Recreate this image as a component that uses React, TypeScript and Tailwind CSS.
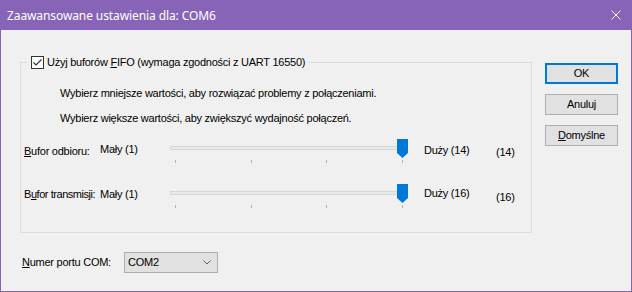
import { type ReactNode } from 'react';

const ui = "font-['Liberation_Sans',Arial,sans-serif] text-[11px] leading-[15px] tracking-[-0.25px] text-black";

function CheckBox() {
    return (
        <svg width="13" height="13" viewBox="0 0 13 13" className="block shrink-0">
            <rect x="0.5" y="0.5" width="12" height="12" fill="#fff" stroke="#333" />
            <path d="M2.5 6.5 L5 9 L10.5 3.5" fill="none" stroke="#333" strokeWidth="1.2" />
        </svg>
    );
}

function Slider() {
    return (
        <div className="relative h-[25px] w-[238px] shrink-0">
            <div className="mt-[7px] h-[4px] border border-[#d6d6d6] bg-[#e7eaea]" />
            <div className="mt-[10px] flex justify-between px-[5px]">
                <div className="h-[3px] w-px bg-[#b4b4b4]" />
                <div className="h-[3px] w-px bg-[#b4b4b4]" />
                <div className="h-[3px] w-px bg-[#b4b4b4]" />
                <div className="h-[3px] w-px bg-[#b4b4b4]" />
            </div>
            {/* suwak */}
            <svg width="11" height="19" viewBox="0 0 11 19" className="absolute top-0 left-[227px]">
                <path d="M0 0H11V14L5.5 19L0 14Z" fill="#0078d7" />
            </svg>
        </div>
    );
}

function Button({ children, primary }: { children: ReactNode; primary?: boolean }) {
    return (
        <div
            className={
                primary
                    ? 'flex h-[21px] w-[73px] items-center justify-center border-2 border-[#0078d7] bg-[#e1e1e1]'
                    : 'flex h-[21px] w-[73px] items-center justify-center border border-[#adadad] bg-[#e1e1e1]'
            }
        >
            {children}
        </div>
    );
}

export default function App() {
    return (
        <div className={`flex h-[292px] w-[632px] flex-col bg-[#8764b8] ${ui}`}>
            {/* pasek tytułu */}
            <div className="flex h-[30px] shrink-0 items-center justify-between pr-[11px] pl-[7px]">
                <span className="font-['Noto_Sans',sans-serif] text-[12px] tracking-[-0.1px] text-white">Zaawansowane ustawienia dla: COM6</span>
                <svg width="10" height="10" viewBox="0 0 10 10" className="block">
                    <path d="M0.5 0.5 L9.5 9.5 M9.5 0.5 L0.5 9.5" stroke="#fff" strokeWidth="1" />
                </svg>
            </div>

            <div className="mx-[1px] mb-[1px] flex flex-1 bg-[#f0f0f0]">
                <div className="pt-[25px] pl-[19px]">
                    <fieldset className="h-[178px] w-[512px] border border-[#dcdcdc]">
                        <legend className="ml-[6px] px-[4px]">
                            <span className="flex h-[15px] items-center gap-[3px]">
                                <CheckBox />
                                <span>
                                    Użyj buforów <u>F</u>IFO (wymaga zgodności z UART 16550)
                                </span>
                            </span>
                        </legend>
                        <div className="flex flex-col">
                            <div className="mt-[16px] pl-[39px]">Wybierz mniejsze wartości, aby rozwiązać problemy z połączeniami.</div>
                            <div className="mt-[10px] pl-[39px]">Wybierz większe wartości, aby zwiększyć wydajność połączeń.</div>

                            <div className="mt-[13px] flex items-start pl-[3px] whitespace-nowrap">
                                <div className="mt-[5px] w-[76px] shrink-0">
                                    <u>B</u>ufor odbioru:
                                </div>
                                <div className="mt-[3px] w-[70px] shrink-0">Mały (1)</div>
                                <Slider />
                                <div className="mt-[4px] ml-[16px] w-[72px]">Duży (14)</div>
                                <div className="mt-[6px]">(14)</div>
                            </div>

                            <div className="mt-[20px] flex items-start pl-[3px] whitespace-nowrap">
                                <div className="mt-[3px] w-[76px] shrink-0 tracking-[-0.45px]">
                                    B<u>u</u>for transmisji:
                                </div>
                                <div className="mt-[3px] w-[70px] shrink-0">Mały (1)</div>
                                <Slider />
                                <div className="mt-[2px] ml-[16px] w-[72px]">Duży (16)</div>
                                <div className="mt-[6px]">(16)</div>
                            </div>
                        </div>
                    </fieldset>

                    <div className="mt-[19px] flex h-[21px] items-center">
                        <div className="w-[104px] pl-[2px]">
                            <u>N</u>umer portu COM:
                        </div>
                        <div className="flex h-[21px] w-[94px] items-center justify-between border border-[#adadad] bg-[#e1e1e1] pr-[6px] pl-[3px]">
                            <span>COM2</span>
                            <svg width="8" height="5" viewBox="0 0 8 5" className="block">
                                <path d="M0.5 0.5 L4 4 L7.5 0.5" fill="none" stroke="#606060" strokeWidth="1" />
                            </svg>
                        </div>
                    </div>
                </div>

                <div className="ml-[13px] flex flex-col gap-[10px] pt-[33px]">
                    <Button primary>OK</Button>
                    <Button>Anuluj</Button>
                    <Button>
                        <span>
                            <u>D</u>omyślne
                        </span>
                    </Button>
                </div>
            </div>
        </div>
    );
}
